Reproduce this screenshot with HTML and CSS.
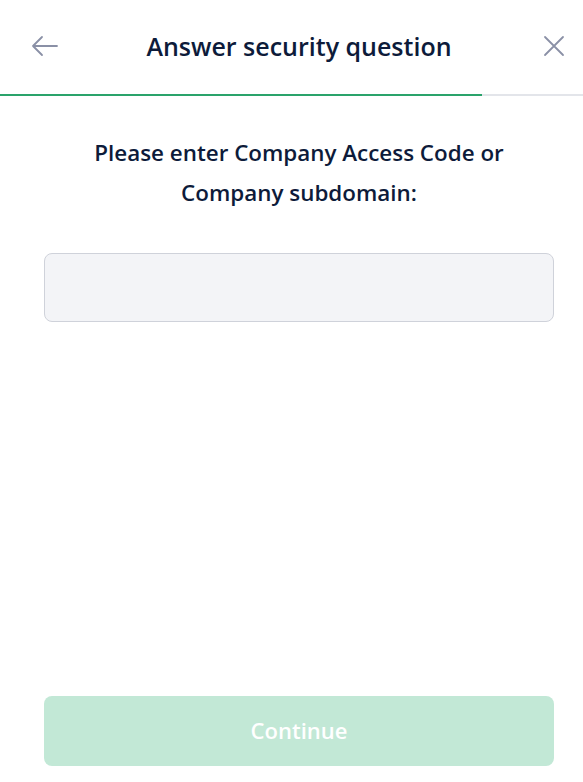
FILE: index.html
```html
<!DOCTYPE html>
<html lang="en">
<head>
<meta charset="utf-8">
<link rel="stylesheet" href="styles.css">
</head>
<body>
<div class="screen">
  <header class="header">
    <button class="icon-btn back" aria-label="Back">
      <svg width="27" height="22" viewBox="0 0 27 22" fill="none" stroke="#8a90a6" stroke-width="1.8" stroke-linecap="round" stroke-linejoin="round"><path d="M26 11H2M11 2L2 11l9 9"/></svg>
    </button>
    <h1 class="title">Answer security question</h1>
    <button class="icon-btn close" aria-label="Close">
      <svg width="22" height="22" viewBox="0 0 22 22" fill="none" stroke="#8a90a6" stroke-width="1.8" stroke-linecap="round"><path d="M2 2l18 18M20 2L2 20"/></svg>
    </button>
  </header>
  <div class="progress"><div class="progress-fill"></div></div>
  <main class="content">
    <p class="prompt">Please enter Company Access Code or<br>Company subdomain:</p>
    <input class="field" type="text">
    <div class="spacer"></div>
    <button class="continue" disabled>Continue</button>
  </main>
</div>
</body>
</html>
```
FILE: styles.css
```css
html, body {
  margin: 0;
  padding: 0;
  background: #ffffff;
}
body {
  font-family: "Open Sans", "Noto Sans", sans-serif;
  color: #0d1b3a;
}
.screen {
  height: 782px;
  display: flex;
  flex-direction: column;
}
.header {
  height: 94px;
  display: grid;
  grid-template-columns: 30px 1fr 24px;
  align-items: center;
  padding: 0 17px 2px 31px;
  box-sizing: border-box;
}
.icon-btn {
  background: none;
  border: 0;
  padding: 0;
  display: flex;
  align-items: center;
  justify-content: flex-start;
  width: 30px;
  height: 30px;
}
.close { width: 24px; height: 24px; justify-content: center; }
.title {
  margin: 0;
  padding-right: 5px;
  text-align: center;
  font-size: 25px;
  font-weight: 600;
  color: #0d1b3a;
}
.progress {
  height: 2px;
  background: #e3e5ea;
}
.progress-fill {
  width: 482px;
  height: 100%;
  background: #2aa36b;
}
.content {
  flex: 1;
  display: flex;
  flex-direction: column;
  padding: 37px 29px 16px 44px;
}
.prompt {
  margin: 0;
  text-align: center;
  font-size: 22.4px;
  font-weight: 600;
  line-height: 40px;
}
.field {
  margin-top: 40px;
  height: 69px;
  box-sizing: border-box;
  border: 1px solid #cfd2da;
  border-radius: 8px;
  background: #f3f4f7;
  font: inherit;
  padding: 0 16px;
  outline: none;
}
.spacer { flex: 1; }
.continue {
  height: 70px;
  border: 0;
  border-radius: 8px;
  background: #c2e8d6;
  color: #ffffff;
  font-family: "Open Sans", "Noto Sans", sans-serif;
  font-size: 22px;
  font-weight: 600;
  padding-bottom: 4px;
}
```
